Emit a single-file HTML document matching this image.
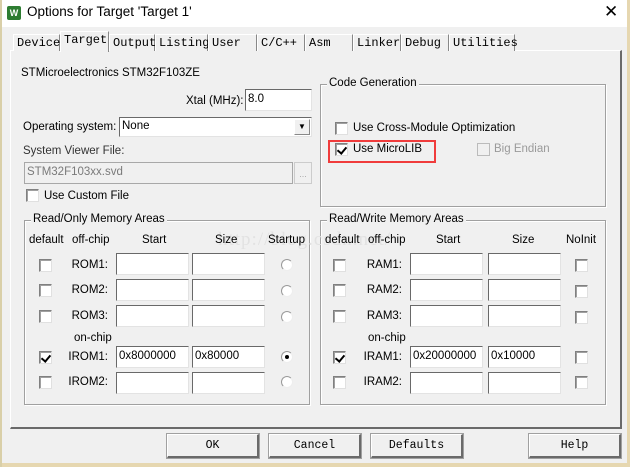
<!DOCTYPE html>
<html><head><meta charset="utf-8"><style>
*{margin:0;padding:0;box-sizing:border-box}
body{width:630px;height:467px;background:#f0f0f0;position:relative;overflow:hidden;font-family:"Liberation Sans",sans-serif;font-size:11.5px;color:#000}
.a{position:absolute;white-space:nowrap}
.tab{position:absolute;top:34px;height:17px;border:1px solid #fff;border-right:1px solid #888;border-bottom:none;font-family:"Liberation Mono",monospace;font-size:12px;padding:1px 0 0 3px;background:#f0f0f0}
.in{position:absolute;background:#fff;border:1px solid #a0a0a0;border-top-color:#696969;border-left-color:#696969;border-right-color:#e3e3e3;border-bottom-color:#e3e3e3;font-size:11.5px;padding:1px 2px;line-height:16px}
.cb{position:absolute;width:13px;height:13px;background:#fff;border:1px solid #808080;border-right-color:#e0e0e0;border-bottom-color:#e0e0e0;box-shadow:inset 1px 1px 0 #a0a0a0}
.rd{position:absolute;width:12px;height:12px;border-radius:50%;background:#fff;border:1px solid #999;border-right-color:#eee;border-bottom-color:#eee}
.grp{position:absolute;border:1px solid #a0a0a0;box-shadow:1px 1px 0 #fff, inset 1px 1px 0 #fff}
.gl{position:absolute;background:#f0f0f0;padding:0 2px;top:-8px;left:6px}
.btn{position:absolute;top:434px;width:92px;height:24px;border:1px solid #fff;border-right:2px solid #6a6a6a;border-bottom:2px solid #6a6a6a;outline:1px solid #a0a0a0;font-family:"Liberation Mono",monospace;font-size:11.5px;text-align:center;line-height:21px;background:#f0f0f0}
.chk::after{content:"";position:absolute;left:3px;top:1px;width:4px;height:7px;border:solid #000;border-width:0 2px 2px 0;transform:rotate(40deg)}
.r{text-align:right}
.t{margin-top:1px}
</style></head><body>
<div class="a" style="left:0;top:0;width:630px;height:27px;background:#fff"></div>
<div class="a" style="left:7px;top:6px;width:14px;height:14px;background:#2e7d32;border-radius:2px;color:#fff;font-size:9px;font-weight:bold;text-align:center;line-height:14px">W</div>
<div class="a" style="left:27px;top:4px;font-size:13.5px">Options for Target 'Target 1'</div>
<div class="a" style="left:604px;top:2px;font-size:17px;font-weight:300">✕</div>
<div class="a" style="left:627px;top:0;width:3px;height:467px;background:#e6d7b0"></div>
<div class="a" style="left:0;top:463px;width:630px;height:4px;background:#e6d7b0"></div>
<div class="a" style="left:0;top:0;width:2px;height:467px;background:#d9cfa8"></div>

<div class="a" style="left:10px;top:50px;width:612px;height:379px;border:1px solid #fff;border-right:2px solid #6a6a6a;border-bottom:2px solid #6a6a6a"></div>
<div class="tab" style="left:13px;width:47px">Device</div>
<div class="tab" style="left:60px;top:31px;height:21px;width:49px;border-bottom:none;z-index:2">Target</div>
<div class="tab" style="left:109px;width:46px">Output</div>
<div class="tab" style="left:155px;width:53px">Listing</div>
<div class="tab" style="left:208px;width:49px">User</div>
<div class="tab" style="left:257px;width:48px">C/C++</div>
<div class="tab" style="left:305px;width:48px">Asm</div>
<div class="tab" style="left:353px;width:48px">Linker</div>
<div class="tab" style="left:401px;width:48px">Debug</div>
<div class="tab" style="left:449px;width:66px">Utilities</div>

<div class="a" style="left:21px;top:67px">STMicroelectronics STM32F103ZE</div>
<div class="a" style="left:186px;top:95px">Xtal (MHz):</div>
<div class="in" style="left:245px;top:89px;width:67px;height:22px">8.0</div>
<div class="a" style="left:23px;top:121px">Operating system:</div>
<div class="in" style="left:119px;top:117px;width:193px;height:20px;line-height:15px">None</div>
<div class="a" style="left:294px;top:119px;width:16px;height:16px;background:#f0f0f0;border:1px solid #fff;border-right-color:#888;border-bottom-color:#888;font-size:8px;text-align:center;line-height:14px">▼</div>
<div class="a" style="left:23px;top:145px;color:#333">System Viewer File:</div>
<div class="in" style="left:24px;top:162px;width:269px;height:22px;background:#f0f0f0;color:#7a7a7a;border-color:#a8a8a8">STM32F103xx.svd</div>
<div class="a" style="left:294px;top:162px;width:18px;height:22px;border:1px solid #ccc;color:#aaa;font-size:9px;text-align:center;line-height:22px">...</div>
<div class="cb" style="left:26px;top:189px"></div>
<div class="a" style="left:44px;top:190px">Use Custom File</div>

<div class="grp" style="left:320px;top:84px;width:286px;height:123px"><div class="gl">Code Generation</div></div>
<div class="cb" style="left:335px;top:122px"></div>
<div class="a" style="left:353px;top:122px">Use Cross-Module Optimization</div>
<div class="cb chk" style="left:335px;top:143px"></div>
<div class="a" style="left:353px;top:143px">Use MicroLIB</div>
<div class="a" style="left:328px;top:140px;width:108px;height:23px;border:2px solid #f03c3c"></div>
<div class="cb" style="left:477px;top:143px;background:#f0f0f0;border-color:#bbb;box-shadow:none"></div>
<div class="a" style="left:494px;top:143px;color:#9a9a9a">Big Endian</div>

<div class="grp" style="left:24px;top:220px;width:286px;height:185px"><div class="gl">Read/Only Memory Areas</div></div>
<div class="grp" style="left:320px;top:220px;width:286px;height:185px"><div class="gl">Read/Write Memory Areas</div></div>
<div class="a" style="left:218px;top:229px;font-family:'Liberation Serif',serif;font-size:19px;color:#e2e2e2;letter-spacing:1px">http://blog.csdn.net/</div>

<div class="a" style="left:29px;top:234px">default</div>
<div class="a" style="left:72px;top:234px">off-chip</div>
<div class="a" style="left:142px;top:234px">Start</div>
<div class="a" style="left:215px;top:234px">Size</div>
<div class="a" style="left:268px;top:234px">Startup</div>
<div class="a" style="left:325px;top:234px">default</div>
<div class="a" style="left:368px;top:234px">off-chip</div>
<div class="a" style="left:436px;top:234px">Start</div>
<div class="a" style="left:512px;top:234px">Size</div>
<div class="a" style="left:566px;top:234px">NoInit</div>

<div class="a" style="left:74px;top:332px">on-chip</div>
<div class="a" style="left:368px;top:332px">on-chip</div>

<div class="cb" style="left:39px;top:259px"></div><div class="a r" style="left:60px;top:259px;width:48px">ROM1:</div><div class="in" style="left:116px;top:253px;width:73px;height:22px"></div><div class="in" style="left:192px;top:253px;width:73px;height:22px"></div><div class="rd" style="left:281px;top:259px"></div>
<div class="cb" style="left:39px;top:284px"></div><div class="a r" style="left:60px;top:284px;width:48px">ROM2:</div><div class="in" style="left:116px;top:279px;width:73px;height:22px"></div><div class="in" style="left:192px;top:279px;width:73px;height:22px"></div><div class="rd" style="left:281px;top:285px"></div>
<div class="cb" style="left:39px;top:310px"></div><div class="a r" style="left:60px;top:310px;width:48px">ROM3:</div><div class="in" style="left:116px;top:305px;width:73px;height:22px"></div><div class="in" style="left:192px;top:305px;width:73px;height:22px"></div><div class="rd" style="left:281px;top:311px"></div>
<div class="cb chk" style="left:39px;top:351px"></div><div class="a r" style="left:60px;top:351px;width:48px">IROM1:</div><div class="in" style="left:116px;top:346px;width:73px;height:22px">0x8000000</div><div class="in" style="left:192px;top:346px;width:73px;height:22px">0x80000</div><div class="rd" style="left:281px;top:351px"><div style="position:absolute;left:3px;top:3px;width:4px;height:4px;border-radius:50%;background:#000"></div></div>
<div class="cb" style="left:39px;top:376px"></div><div class="a r" style="left:60px;top:376px;width:48px">IROM2:</div><div class="in" style="left:116px;top:372px;width:73px;height:22px"></div><div class="in" style="left:192px;top:372px;width:73px;height:22px"></div><div class="rd" style="left:281px;top:376px"></div>

<div class="cb" style="left:333px;top:259px"></div><div class="a r" style="left:354px;top:259px;width:48px">RAM1:</div><div class="in" style="left:410px;top:253px;width:73px;height:22px"></div><div class="in" style="left:488px;top:253px;width:73px;height:22px"></div><div class="cb" style="left:575px;top:259px"></div>
<div class="cb" style="left:333px;top:284px"></div><div class="a r" style="left:354px;top:284px;width:48px">RAM2:</div><div class="in" style="left:410px;top:279px;width:73px;height:22px"></div><div class="in" style="left:488px;top:279px;width:73px;height:22px"></div><div class="cb" style="left:575px;top:285px"></div>
<div class="cb" style="left:333px;top:310px"></div><div class="a r" style="left:354px;top:310px;width:48px">RAM3:</div><div class="in" style="left:410px;top:305px;width:73px;height:22px"></div><div class="in" style="left:488px;top:305px;width:73px;height:22px"></div><div class="cb" style="left:575px;top:311px"></div>
<div class="cb chk" style="left:333px;top:351px"></div><div class="a r" style="left:354px;top:351px;width:48px">IRAM1:</div><div class="in" style="left:410px;top:346px;width:73px;height:22px">0x20000000</div><div class="in" style="left:488px;top:346px;width:73px;height:22px">0x10000</div><div class="cb" style="left:575px;top:351px"></div>
<div class="cb" style="left:333px;top:376px"></div><div class="a r" style="left:354px;top:376px;width:48px">IRAM2:</div><div class="in" style="left:410px;top:372px;width:73px;height:22px"></div><div class="in" style="left:488px;top:372px;width:73px;height:22px"></div><div class="cb" style="left:575px;top:376px"></div>

<div class="btn" style="left:167px">OK</div>
<div class="btn" style="left:269px">Cancel</div>
<div class="btn" style="left:371px">Defaults</div>
<div class="btn" style="left:529px">Help</div>
</body></html>
